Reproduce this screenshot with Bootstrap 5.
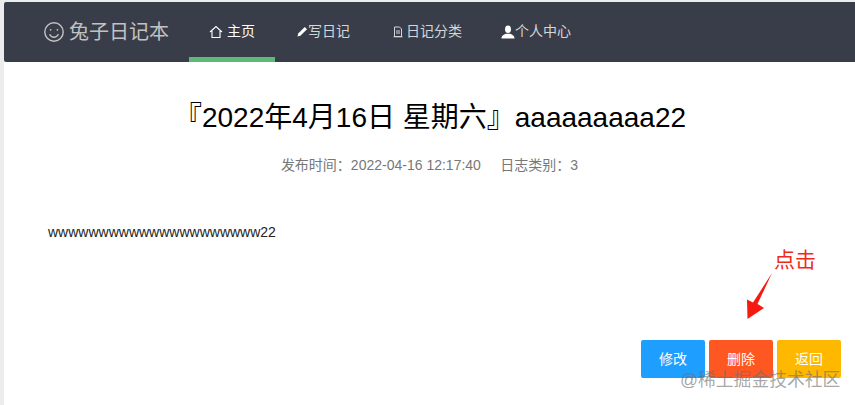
<!doctype html>
<html lang="en">
<head>
    <meta charset="utf-8">
    <meta name="viewport" content="width=device-width, initial-scale=1">
    <title>日记详情</title>
    <link href="https://cdn.jsdelivr.net/npm/bootstrap@5.3.3/dist/css/bootstrap.min.css" rel="stylesheet">
    <style>
        html, body {
            height: 405px;
            overflow: hidden;
        }
        body {
            background-color: #ececec;
            padding: 2px 0 0 4px;
            font-family: "Liberation Sans", "Noto Sans CJK SC", sans-serif;
            position: relative;
        }
        .page-box {
            background: #fff;
            height: 403px;
            border-top-left-radius: 2px;
        }
        .top-bar {
            height: 60px;
            background: #393d49;
            padding-left: 39px;
            border-radius: 2px 0 0 2px;
        }
        .brand-area {
            width: 146px;
            color: #c2c2c2;
            font-size: 20px;
            gap: 4px;
        }
        .menu-item {
            height: 60px;
            padding-bottom: 1px;
            color: #d4d6da;
            font-size: 14px;
            text-decoration: none;
            border-bottom: 5px solid transparent;
            padding-top: 5px;
        }
        .menu-item.on {
            color: #fff;
            border-bottom-color: #5fb878;
            width: 86px;
        }
        .item-write { width: 118px; padding-left: 22px; }
        .item-kinds { width: 108px; padding-left: 0; gap: 3px; }
        .item-me { padding-left: 0; }
        .diary-title {
            font-size: 28px;
            line-height: 40px;
            color: #000;
            margin: 36px 0 0 0;
            font-weight: 400;
            padding-left: 1px;
        }
        .diary-meta {
            font-size: 14px;
            color: #777;
            margin-top: 17px;
            line-height: 20px;
        }
        .diary-text {
            font-size: 14px;
            color: #222;
            margin: 47px 0 0 44px;
            line-height: 20px;
        }
        .action-row {
            gap: 4px;
            margin-top: 98px;
            padding-right: 14px;
        }
        .act-btn {
            width: 64px;
            height: 38px;
            font-size: 14px;
            color: #fff;
            border: 0;
            padding: 0;
            border-radius: 2px;
        }
        .act-blue { background: #1e9fff; }
        .act-red { background: #ff5722; }
        .act-yellow { background: #ffb800; }
        .click-note {
            position: absolute;
            left: 774px;
            top: 247px;
            color: #f02a1a;
            font-size: 21px;
            line-height: 26px;
        }
        .click-arrow {
            position: absolute;
            left: 745px;
            top: 272px;
        }
        .site-mark {
            position: absolute;
            left: 680px;
            top: 370px;
            font-size: 17.8px;
            line-height: 20px;
            color: rgba(110, 110, 110, .62);
            white-space: nowrap;
        }
    </style>
</head>
<body>
    <div class="page-box">
        <nav class="top-bar d-flex align-items-center">
            <div class="brand-area d-flex align-items-center">
                <svg width="22" height="22" viewBox="0 0 22 22" fill="none" stroke="#c2c2c2" stroke-width="1.4">
                    <circle cx="11" cy="11" r="9.2"/>
                    <circle cx="7.6" cy="8.8" r=".9" fill="#c2c2c2" stroke="none"/>
                    <circle cx="14.4" cy="8.8" r=".9" fill="#c2c2c2" stroke="none"/>
                    <path d="M6.6 13.2c1 2 2.6 3 4.4 3s3.400-1 4.400-3"/>
                </svg>
                <span>兔子日记本</span>
            </div>
            <a href="#" class="menu-item on d-flex align-items-center justify-content-center gap-1">
                <svg width="14" height="14" viewBox="0 0 14 14" fill="none" stroke="#fff" stroke-width="1.1">
                    <path d="M1 7 7 1.500 13 7M3 6v6.500h8V6"/>
                </svg>
                <span>主页</span>
            </a>
            <a href="#" class="menu-item item-write d-flex align-items-center">
                <svg width="11" height="11" viewBox="0 0 11 11" fill="#fff">
                    <path d="M.5 10.500 1.200 7.600 7.800 1l2.200 2.200-6.600 6.600z"/>
                </svg>
                <span>写日记</span>
            </a>
            <a href="#" class="menu-item item-kinds d-flex align-items-center">
                <svg width="10" height="12" viewBox="0 0 10 12" fill="none" stroke="#d4d6da" stroke-width="1">
                    <path d="M1.500 1h5l2 2v7.500h-7zM3 5h4M3 7h4M.5 10.800h9"/>
                </svg>
                <span>日记分类</span>
            </a>
            <a href="#" class="menu-item item-me d-flex align-items-center">
                <svg width="14" height="14" viewBox="0 0 14 14" fill="#fff">
                    <ellipse cx="7" cy="4.200" rx="3" ry="3.800"/>
                    <path d="M.5 13.500c0-3 2-3.800 4.500-4.800h4c2.500 1 4.500 1.800 4.500 4.800z"/>
                </svg>
                <span>个人中心</span>
            </a>
        </nav>
        <h1 class="diary-title text-center">『2022年4月16日 星期六』aaaaaaaaa22</h1>
        <div class="diary-meta text-center">发布时间：2022-04-16 12:17:40 &nbsp;&nbsp;&nbsp; 日志类别：3</div>
        <p class="diary-text mb-0">wwwwwwwwwwwwwwwwwwwww22</p>
        <div class="action-row d-flex justify-content-end">
            <button type="button" class="btn act-btn act-blue">修改</button>
            <button type="button" class="btn act-btn act-red">删除</button>
            <button type="button" class="btn act-btn act-yellow">返回</button>
        </div>
    </div>
    <div class="click-note">点击</div>
    <svg class="click-arrow" width="30" height="48" viewBox="0 0 30 48" fill="#f5190f">
        <path d="M27 1 12.500 32 19 36 2.500 47 2 27.500 8 30.500z"/>
    </svg>
    <div class="site-mark">@稀土掘金技术社区</div>
</body>
</html>
